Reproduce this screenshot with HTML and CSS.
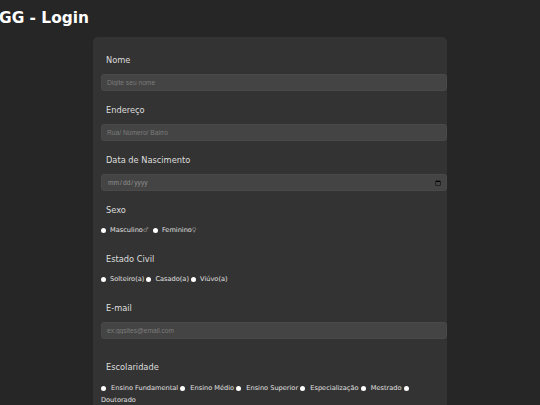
FILE: index.html
```html
<!DOCTYPE html>
<html lang="pt-BR">
<head>
<meta charset="utf-8">
<title>GG - Login</title>
<link rel="stylesheet" href="styles.css">
</head>
<body>
<h1 class="title">GG - Login</h1>
<form class="card">
  <div class="field">
    <label class="field-label" for="nome">Nome</label>
    <input class="text-input" id="nome" type="text" placeholder="Digite seu nome">
  </div>
  <div class="field">
    <label class="field-label" for="endereco">Endereço</label>
    <input class="text-input" id="endereco" type="text" placeholder="Rua/ Número/ Bairro">
  </div>
  <div class="field">
    <label class="field-label" for="nasc">Data de Nascimento</label>
    <input class="text-input date-input" id="nasc" type="date">
  </div>
  <div class="field choice-field">
    <span class="field-label">Sexo</span>
    <div class="options">
      <label class="opt"><input class="radio" type="radio" name="sexo">Masculino<span class="sym">♂</span></label>
      <label class="opt"><input class="radio" type="radio" name="sexo">Feminino<span class="sym">♀</span></label>
    </div>
  </div>
  <div class="field choice-field">
    <span class="field-label">Estado Civil</span>
    <div class="options">
      <label class="opt"><input class="radio" type="radio" name="civil">Solteiro(a)</label>
      <label class="opt"><input class="radio" type="radio" name="civil">Casado(a)</label>
      <label class="opt"><input class="radio" type="radio" name="civil">Viúvo(a)</label>
    </div>
  </div>
  <div class="field field-wide">
    <label class="field-label" for="email">E-mail</label>
    <input class="text-input" id="email" type="email" placeholder="ex:ggsites@email.com">
  </div>
  <div class="field choice-field">
    <span class="field-label">Escolaridade</span>
    <div class="options options-spaced">
      <label class="opt"><input class="radio" type="radio" name="esc"> Ensino Fundamental</label>
      <label class="opt"><input class="radio" type="radio" name="esc"> Ensino Médio</label>
      <label class="opt"><input class="radio" type="radio" name="esc"> Ensino Superior</label>
      <label class="opt"><input class="radio" type="radio" name="esc"> Especialização</label>
      <label class="opt"><input class="radio" type="radio" name="esc"> Mestrado</label>
      <label class="opt"><input class="radio" type="radio" name="esc"> Doutorado</label>
    </div>
  </div>
</form>
</body>
</html>
```

FILE: styles.css
```css
html, body {
  margin: 0;
  padding: 0;
}

body {
  background: #262626;
  color: #e4e4e4;
  font-family: "DejaVu Sans", Verdana, sans-serif;
}

.title {
  margin: 0 0 0 -1px;
  padding-top: 10px;
  font-size: 15.4px;
  line-height: 17px;
  font-weight: bold;
  color: #ffffff;
}

.card {
  box-sizing: border-box;
  width: 354px;
  margin: 10px auto 0;
  padding: 18px 0 20px 8px;
  background: #333333;
  border-radius: 5px;
}

.field {
  margin-bottom: 14px;
}

.field-wide {
  margin-bottom: 23px;
}

.field-label {
  display: block;
  padding-left: 5px;
  margin-bottom: 9px;
  font-size: 8.25px;
  line-height: 10px;
  color: #dedede;
}

.text-input {
  display: block;
  box-sizing: border-box;
  width: 100%;
  height: 17px;
  margin: 0;
  padding: 0 5px;
  border: 1px solid #494949;
  border-radius: 3px;
  background: #444444;
  color: #9a9a9a;
  font-family: "Liberation Sans", Arial, sans-serif;
  font-size: 6.67px;
  outline: none;
}

.text-input::placeholder {
  color: #7b7b7b;
}

.date-input::-webkit-datetime-edit {
  color: #8f8f8f;
  padding: 0;
}

.date-input::-webkit-calendar-picker-indicator {
  width: 6px;
  height: 6px;
  padding: 0;
  margin: 0;
}

.choice-field {
  margin-bottom: 18px;
}

.options {
  font-size: 6.6px;
  line-height: 12px;
  color: #e0e0e0;
}

.options-spaced {
  padding-top: 1px;
}

.radio {
  -webkit-appearance: none;
  appearance: none;
  display: inline-block;
  width: 5px;
  height: 5px;
  margin: 0 4px 0 0;
  padding: 0;
  border: none;
  border-radius: 50%;
  background: #ffffff;
  vertical-align: -0.5px;
}

.options-spaced .radio {
  margin-right: 3px;
}

.sym {
  color: #8a8a8a;
  margin-right: 2px;
}
```
